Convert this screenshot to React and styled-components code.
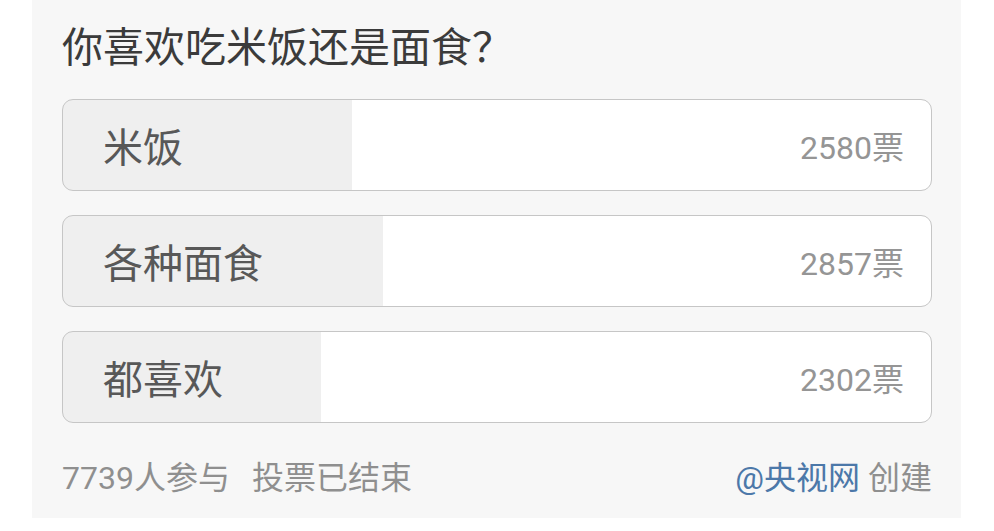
import React from 'react';
import styled, { createGlobalStyle } from 'styled-components';

const GlobalStyle = createGlobalStyle`
  html, body {
    margin: 0;
    padding: 0;
    background: #ffffff;
  }
  body {
    font-family: Roboto, "Noto Sans CJK SC", "Noto Sans", sans-serif;
  }
`;

const Page = styled.div`
  width: 994px;
  height: 531px;
  background: #ffffff;
`;

const PollCard = styled.div`
  width: 929px;
  margin-left: 32px;
  box-sizing: border-box;
  padding: 16px 29px 18px 30px;
  background: #f7f7f7;
`;

const Question = styled.h1`
  margin: 0 0 27px;
  font-family: "Noto Sans CJK SC", sans-serif;
  font-size: 41px;
  line-height: 56px;
  font-weight: 400;
  color: #3b3b3b;
`;

const OptionList = styled.div`
  display: flex;
  flex-direction: column;
  gap: 24px;
`;

const OptionRow = styled.div`
  height: 92px;
  box-sizing: border-box;
  display: flex;
  align-items: center;
  justify-content: space-between;
  padding: 0 27px 0 40px;
  border: 1.5px solid #c6c6c6;
  border-radius: 11px;
  background: linear-gradient(
    to right,
    #efefef ${props => props.$pct}%,
    #ffffff ${props => props.$pct}%
  );
`;

const OptionLabel = styled.span`
  font-size: 40px;
  color: #585858;
`;

const VoteCount = styled.span`
  font-size: 32px;
  color: #959595;
`;

const Footer = styled.div`
  display: flex;
  justify-content: space-between;
  align-items: center;
  margin-top: 27px;
  height: 50px;
  font-size: 32px;
  color: #8f8f8f;
`;

const Stats = styled.div`
  display: flex;
  gap: 22px;
`;

const Creator = styled.div`
  display: flex;
  gap: 8px;
`;

const CreatorLink = styled.span`
  color: #4c78a9;
`;

const options = [
  { label: '米饭', votes: 2580 },
  { label: '各种面食', votes: 2857 },
  { label: '都喜欢', votes: 2302 },
];

const total = options.reduce((sum, o) => sum + o.votes, 0);

const App = () => (
  <Page>
    <GlobalStyle />
    <PollCard>
      <Question>你喜欢吃米饭还是面食？</Question>
      <OptionList>
        {options.map(option => (
          <OptionRow key={option.label} $pct={(option.votes / total) * 100}>
            <OptionLabel>{option.label}</OptionLabel>
            <VoteCount>{option.votes}票</VoteCount>
          </OptionRow>
        ))}
      </OptionList>
      <Footer>
        <Stats>
          <span>{total}人参与</span>
          <span>投票已结束</span>
        </Stats>
        <Creator>
          <CreatorLink>@央视网</CreatorLink>
          <span>创建</span>
        </Creator>
      </Footer>
    </PollCard>
  </Page>
);

export default App;
